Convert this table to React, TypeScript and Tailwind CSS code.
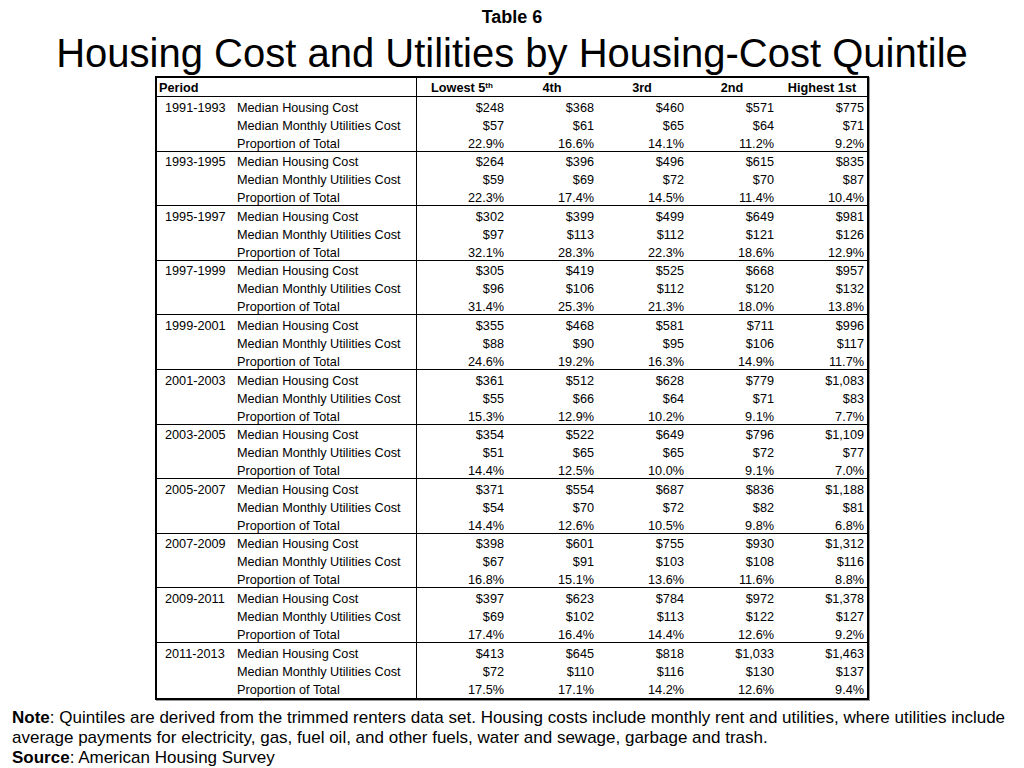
import React from "react";

type Group = { period: string; h: string[]; u: string[]; p: string[] };

const data: Group[] = [
  { period: "1991-1993", h: ["$248", "$368", "$460", "$571", "$775"], u: ["$57", "$61", "$65", "$64", "$71"], p: ["22.9%", "16.6%", "14.1%", "11.2%", "9.2%"] },
  { period: "1993-1995", h: ["$264", "$396", "$496", "$615", "$835"], u: ["$59", "$69", "$72", "$70", "$87"], p: ["22.3%", "17.4%", "14.5%", "11.4%", "10.4%"] },
  { period: "1995-1997", h: ["$302", "$399", "$499", "$649", "$981"], u: ["$97", "$113", "$112", "$121", "$126"], p: ["32.1%", "28.3%", "22.3%", "18.6%", "12.9%"] },
  { period: "1997-1999", h: ["$305", "$419", "$525", "$668", "$957"], u: ["$96", "$106", "$112", "$120", "$132"], p: ["31.4%", "25.3%", "21.3%", "18.0%", "13.8%"] },
  { period: "1999-2001", h: ["$355", "$468", "$581", "$711", "$996"], u: ["$88", "$90", "$95", "$106", "$117"], p: ["24.6%", "19.2%", "16.3%", "14.9%", "11.7%"] },
  { period: "2001-2003", h: ["$361", "$512", "$628", "$779", "$1,083"], u: ["$55", "$66", "$64", "$71", "$83"], p: ["15.3%", "12.9%", "10.2%", "9.1%", "7.7%"] },
  { period: "2003-2005", h: ["$354", "$522", "$649", "$796", "$1,109"], u: ["$51", "$65", "$65", "$72", "$77"], p: ["14.4%", "12.5%", "10.0%", "9.1%", "7.0%"] },
  { period: "2005-2007", h: ["$371", "$554", "$687", "$836", "$1,188"], u: ["$54", "$70", "$72", "$82", "$81"], p: ["14.4%", "12.6%", "10.5%", "9.8%", "6.8%"] },
  { period: "2007-2009", h: ["$398", "$601", "$755", "$930", "$1,312"], u: ["$67", "$91", "$103", "$108", "$116"], p: ["16.8%", "15.1%", "13.6%", "11.6%", "8.8%"] },
  { period: "2009-2011", h: ["$397", "$623", "$784", "$972", "$1,378"], u: ["$69", "$102", "$113", "$122", "$127"], p: ["17.4%", "16.4%", "14.4%", "12.6%", "9.2%"] },
  { period: "2011-2013", h: ["$413", "$645", "$818", "$1,033", "$1,463"], u: ["$72", "$110", "$116", "$130", "$137"], p: ["17.5%", "17.1%", "14.2%", "12.6%", "9.4%"] },
];

function Row({ period, label, vals }: { period: string; label: string; vals: string[] }) {
  return (
    <div className="flex h-[18px] shrink-0 items-center">
      <div className="flex h-full w-[260px] items-center">
        <div className="w-[80px] pl-[8px]">{period}</div>
        <div>{label}</div>
      </div>
      {vals.map((v, i) => (
        <div key={i} className="w-[90px] pr-[3px] text-right">
          {v}
        </div>
      ))}
    </div>
  );
}

export default function App() {
  return (
    <div
      className="relative h-[768px] w-[1024px] overflow-hidden bg-white text-black"
      style={{ fontFamily: '"Liberation Sans", Arial, sans-serif' }}
    >
      <div className="h-[30px] pt-[6px] text-center text-[18px] font-bold leading-[22px]">Table 6</div>
      <div className="h-[46px] text-center text-[40px] leading-[46px]">
        Housing Cost and Utilities by Housing-Cost Quintile
      </div>
      <div className="relative ml-[155px] w-[714px] border-2 border-black text-[12.7px] leading-none text-black shadow-[1px_1px_0_#999]">
        <div className="pointer-events-none absolute left-[259px] top-0 bottom-0 w-px bg-black" />
        <div className="flex h-[19px] items-center border-b border-black pt-[2px] font-bold">
          <div className="flex h-full w-[260px] items-center pl-[2px]">Period</div>
          <div className="w-[90px] text-center">
            Lowest 5<span className="relative -top-[4px] text-[8px]">th</span>
          </div>
          <div className="w-[90px] text-center">4th</div>
          <div className="w-[90px] text-center">3rd</div>
          <div className="w-[90px] text-center">2nd</div>
          <div className="w-[90px] text-center">Highest 1st</div>
        </div>
        {data.map((g, gi) => (
          <div
            key={g.period}
            className={
              "flex h-[54.6px] flex-col pt-[2px] " + (gi < data.length - 1 ? "border-b border-black" : "")
            }
          >
            <Row period={g.period} label="Median Housing Cost" vals={g.h} />
            <Row period="" label="Median Monthly Utilities Cost" vals={g.u} />
            <Row period="" label="Proportion of Total" vals={g.p} />
          </div>
        ))}
      </div>
      <div className="mt-[8px] pl-[12px] text-[17px] leading-[20px] whitespace-nowrap">
        <div>
          <b>Note</b>: Quintiles are derived from the trimmed renters data set. Housing costs include monthly rent and utilities, where utilities include
        </div>
        <div>average payments for electricity, gas, fuel oil, and other fuels, water and sewage, garbage and trash.</div>
        <div>
          <b>Source</b>: American Housing Survey
        </div>
      </div>
    </div>
  );
}
